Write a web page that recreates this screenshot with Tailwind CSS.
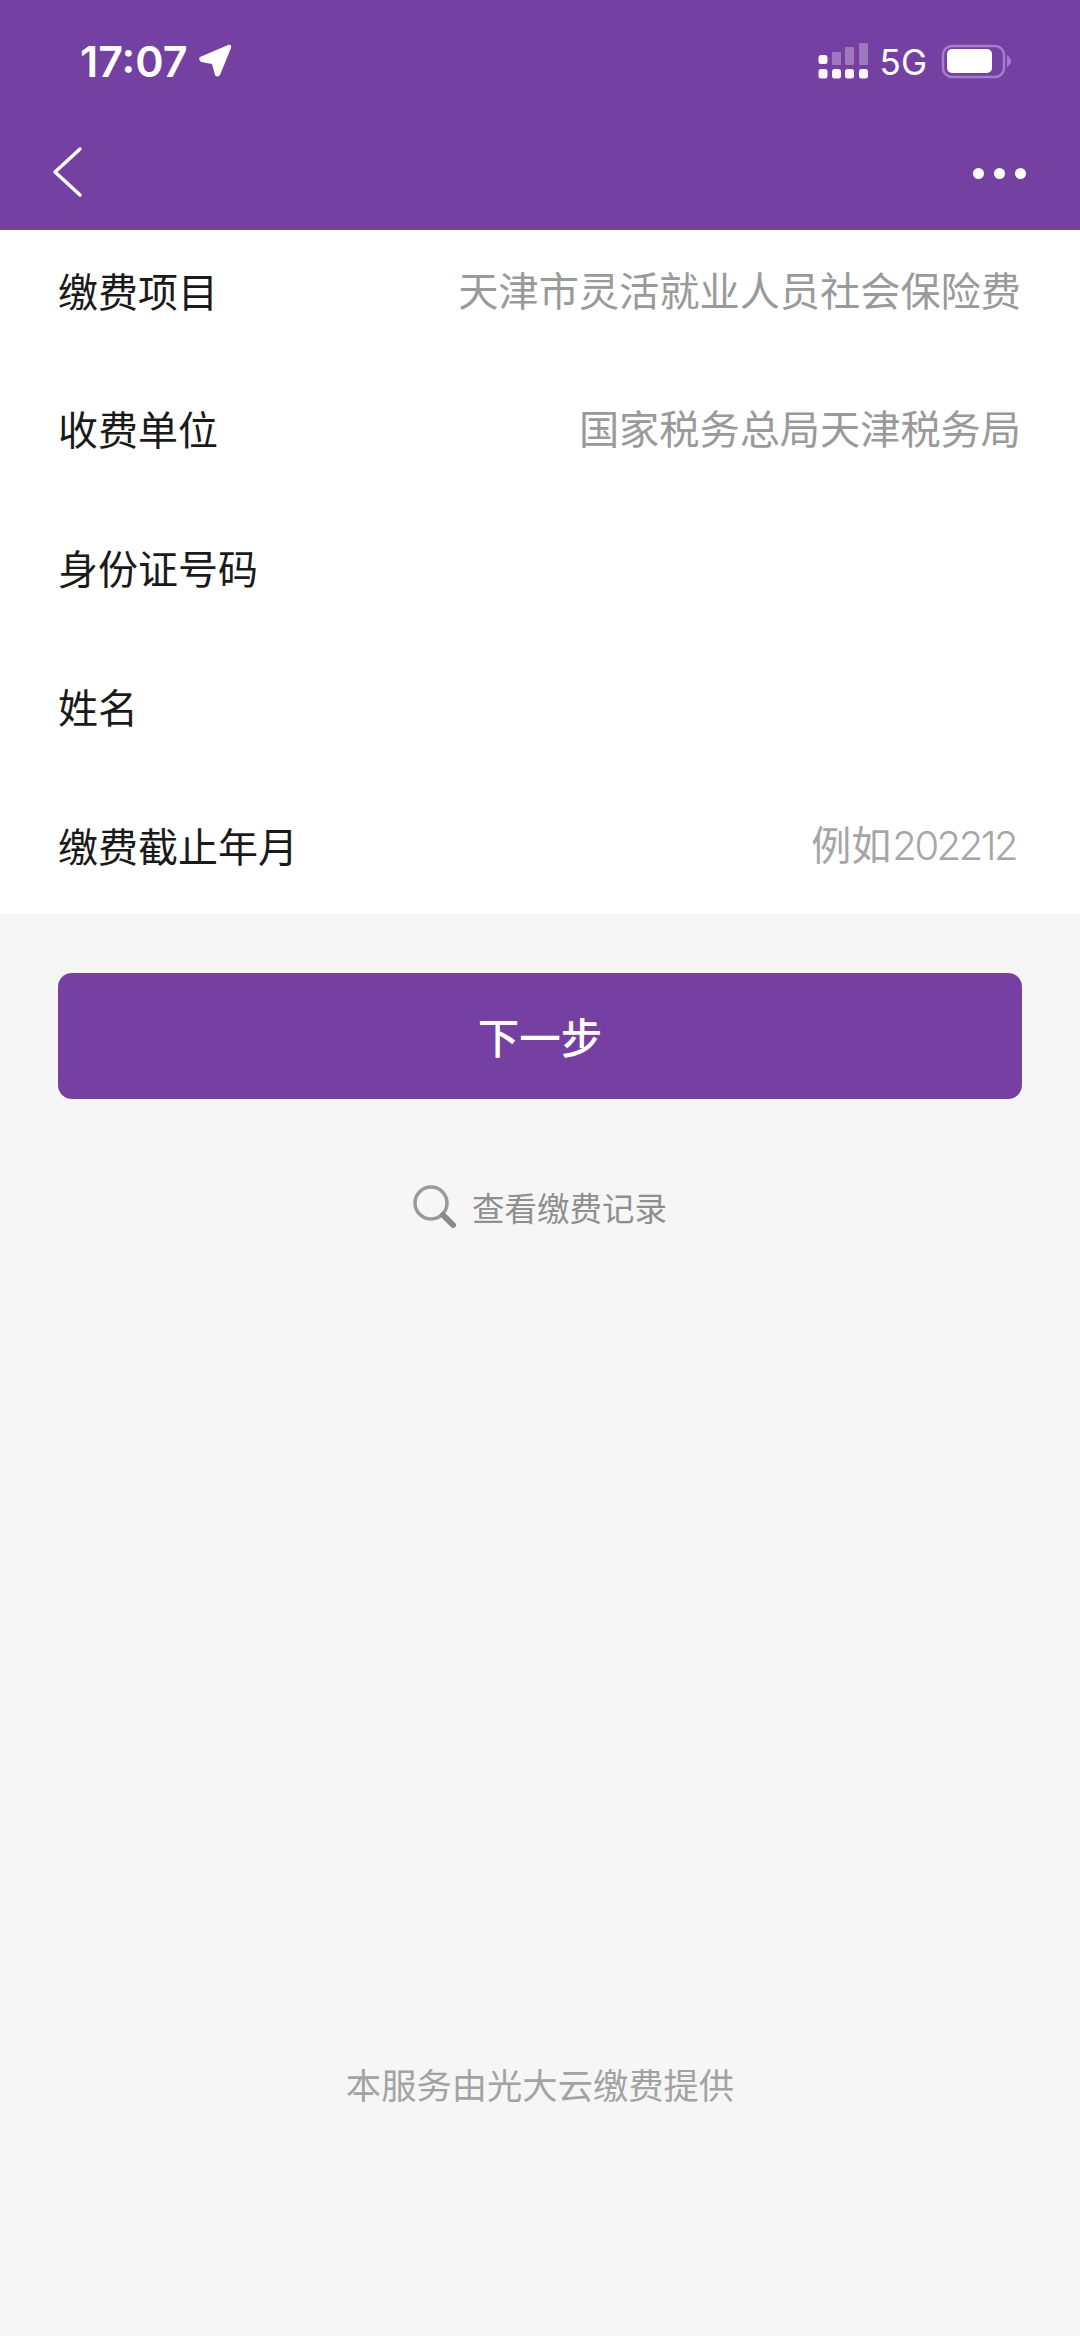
<!DOCTYPE html>
<html lang="zh-CN">
<head>
  <meta charset="UTF-8">
  <meta name="viewport" content="width=device-width, initial-scale=1.0">
  <title>缴费</title>
  <script src="https://cdn.jsdelivr.net/npm/@tailwindcss/browser@4"></script>
</head>
<body class="bg-[#f6f6f6] font-['Noto_Sans_CJK_SC','Noto_Sans',sans-serif]">
  <div class="w-[1080px] h-[2336px] flex flex-col overflow-hidden">
    <!-- header -->
    <div class="h-[230px] bg-[#7440a2] text-white shrink-0">
      <div class="h-[122px] flex justify-between pl-[80px] pr-[67px] pt-[37px]">
        <div class="flex items-start gap-[10px]">
          <span class="font-['Inter'] text-[43px] leading-[48px] font-semibold">17:07</span>
          <svg class="mt-[7px]" width="34" height="34" viewBox="0 0 34 34"><path d="M2 13 L30 1 Q34 0 33 4 L22 31 Q19 34 17 31 L14 20 L3 18 Q0 15 2 13 Z" fill="#fff"/></svg>
        </div>
        <div class="flex items-start pt-[3px]">
          <svg class="mt-[3px] mr-[11px]" width="52" height="36" viewBox="0 0 52 36">
            <rect x="15" y="9" width="9" height="13" rx="1" fill="#fff" fill-opacity=".3"/>
            <rect x="28" y="4" width="9" height="18" rx="1" fill="#fff" fill-opacity=".3"/>
            <rect x="42" y="0" width="9" height="22" rx="1" fill="#fff" fill-opacity=".3"/>
            <rect x="1.5" y="12" width="9" height="9" rx="2.5" fill="#fdf4ff"/>
            <rect x="1.5" y="26" width="9" height="9.5" rx="2.5" fill="#fdf4ff"/>
            <rect x="15" y="26" width="9" height="9.5" rx="2.5" fill="#fdf4ff"/>
            <rect x="28" y="26" width="9" height="9.5" rx="2.5" fill="#fdf4ff"/>
            <rect x="42" y="26" width="9" height="9.5" rx="2.5" fill="#fdf4ff"/>
          </svg>
          <span class="font-['Inter'] text-[35px] leading-[38px] mt-[3px] mr-[14px]">5G</span>
          <svg class="mt-[4px]" width="72" height="36" viewBox="0 0 72 36">
            <rect x="2" y="2" width="61" height="31" rx="9" fill="none" stroke="#a67fcb" stroke-width="2.5"/>
            <rect x="6" y="5" width="45" height="24" rx="5" fill="#fff"/>
            <path d="M66 11 Q70 14 70 17 Q70 20 66 23 Z" fill="#a67fcb"/>
          </svg>
        </div>
      </div>
      <div class="h-[108px] flex justify-between items-start pl-[50px] pr-[54px]">
        <svg class="mt-[24px]" width="34" height="52" viewBox="0 0 34 52"><path d="M30 3 L5 26 L30 49" fill="none" stroke="#fff" stroke-width="3.5" stroke-linecap="round" stroke-linejoin="round"/></svg>
        <div class="flex gap-[10px] mt-[46px]">
          <span class="w-[11px] h-[11px] rounded-full bg-white"></span>
          <span class="w-[11px] h-[11px] rounded-full bg-white"></span>
          <span class="w-[11px] h-[11px] rounded-full bg-white"></span>
        </div>
      </div>
    </div>

    <!-- form rows -->
    <div class="bg-white h-[684px] shrink-0 flex flex-col pl-[58px] pr-[59px] text-[40px] text-[#1a1a1a]">
      <div class="h-[128px] pb-[9px] flex justify-between items-center">
        <span>缴费项目</span><span class="text-[40.2px] text-[#9a9a9a]">天津市灵活就业人员社会保险费</span>
      </div>
      <div class="h-[139px] flex justify-between items-center">
        <span>收费单位</span><span class="text-[40.2px] text-[#9a9a9a]">国家税务总局天津税务局</span>
      </div>
      <div class="h-[139px] flex items-center">
        <span>身份证号码</span>
      </div>
      <div class="h-[139px] flex items-center">
        <span>姓名</span>
      </div>
      <div class="h-[139px] flex justify-between items-center">
        <span>缴费截止年月</span><span class="text-[#a6a6a6] pr-[5px]">例如<span class="font-['Inter'] font-light ml-[1px] tracking-[-2.5px]">202212</span></span>
      </div>
    </div>

    <!-- next button -->
    <div class="mt-[59px] mx-[58px] h-[126px] rounded-[14px] bg-[#7540a2] flex items-center justify-center text-white text-[41.5px] font-medium">下一步</div>

    <!-- record link -->
    <div class="mt-[84px] flex items-center justify-center gap-[14px] text-[32.5px] text-[#8f8f8f] pr-[1px]">
      <svg width="46" height="46" viewBox="0 0 46 46"><circle cx="19" cy="19" r="16" fill="none" stroke="#9a9a9a" stroke-width="3.5"/><path d="M31 31 L41 41" stroke="#8a8a8a" stroke-width="6" stroke-linecap="round"/></svg>
      <span>查看缴费记录</span>
    </div>

    <!-- footer -->
    <div class="mt-[826px] text-center text-[35.3px] text-[#a3a3a3]">本服务由光大云缴费提供</div>
  </div>
</body>
</html>
